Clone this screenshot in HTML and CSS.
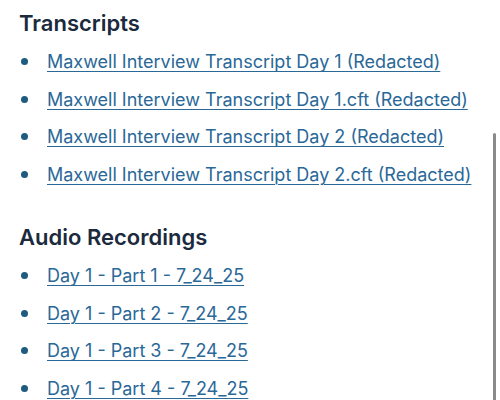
FILE: index.html
```html
<!DOCTYPE html>
<html lang="en">
<head>
<meta charset="utf-8">
<title>Transcripts and Audio Recordings</title>
<link rel="stylesheet" href="styles.css">
</head>
<body>
<main class="page">
  <section class="group">
    <h2 class="group-title">Transcripts</h2>
    <ul class="doc-list">
      <li><a href="#">Maxwell Interview Transcript Day 1 (Redacted)</a></li>
      <li><a href="#">Maxwell Interview Transcript Day 1.cft (Redacted)</a></li>
      <li><a href="#">Maxwell Interview Transcript Day 2 (Redacted)</a></li>
      <li><a href="#">Maxwell Interview Transcript Day 2.cft (Redacted)</a></li>
    </ul>
  </section>
  <section class="group">
    <h2 class="group-title">Audio Recordings</h2>
    <ul class="doc-list">
      <li><a href="#">Day 1 - Part 1 - 7_24_25</a></li>
      <li><a href="#">Day 1 - Part 2 - 7_24_25</a></li>
      <li><a href="#">Day 1 - Part 3 - 7_24_25</a></li>
      <li><a href="#">Day 1 - Part 4 - 7_24_25</a></li>
    </ul>
  </section>
</main>
<div class="scroll-thumb"></div>
</body>
</html>
```
FILE: styles.css
```css
html, body {
  margin: 0;
  padding: 0;
  background: #ffffff;
  overflow: hidden;
}

body {
  font-family: Inter, "Open Sans", "Liberation Sans", sans-serif;
  color: #1b2a3d;
}

.page {
  padding: 8px 0 0 19px;
}

.group + .group {
  margin-top: 29px;
}

.group-title {
  margin: 0;
  font-size: 22px;
  font-weight: 600;
  line-height: 30px;
  color: #1b2a3d;
}

.doc-list {
  list-style: none;
  margin: 5px 0 0 0;
  padding: 0;
}

.doc-list li {
  display: flex;
  align-items: center;
  height: 37.5px;
  font-size: 18px;
}

.doc-list li::before {
  content: "";
  width: 7px;
  height: 7px;
  border-radius: 50%;
  background: #1d5b7f;
  margin: 0 19px 0 2px;
  flex: none;
}

.doc-list a {
  color: #2a6898;
  text-decoration: underline;
  text-underline-offset: 3px;
  text-decoration-thickness: 1px;
  white-space: nowrap;
}

.scroll-thumb {
  position: absolute;
  top: 133px;
  right: 4px;
  width: 3px;
  height: 300px;
  background: #8a8a8a;
  border-radius: 2px;
}
```
